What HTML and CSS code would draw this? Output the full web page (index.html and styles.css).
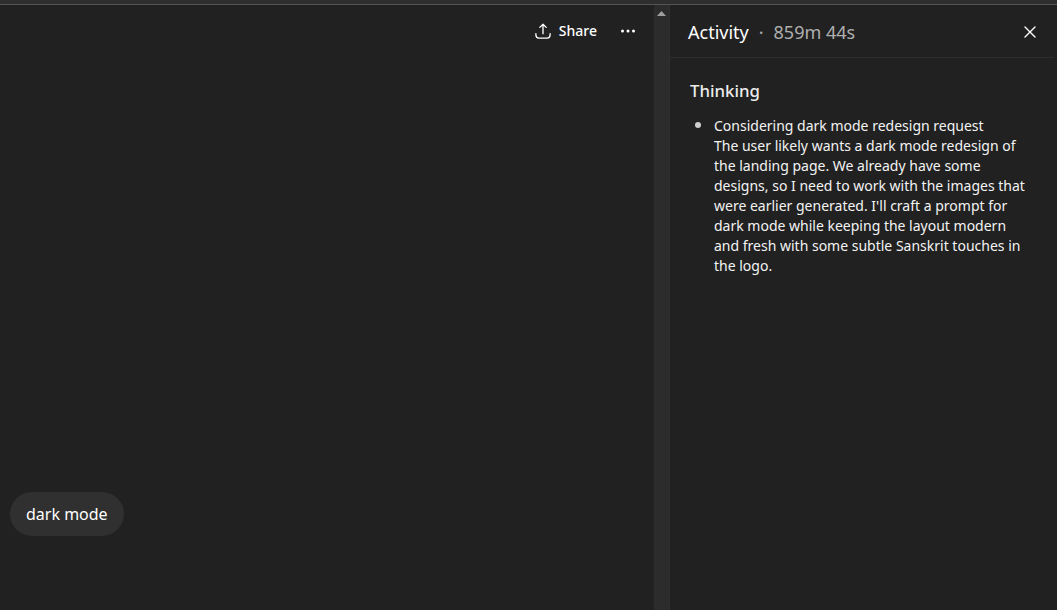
FILE: index.html
```html
<!DOCTYPE html>
<html lang="en">

<head>
    <meta charset="UTF-8">
    <meta name="viewport" content="width=device-width, initial-scale=1.0">
    <title>Chat</title>
    <link rel="stylesheet" href="styles.css">
</head>

<body>
    <div class="top-strip"></div>
    <div class="app">
        <main class="chat">
            <header class="chat-header">
                <button class="share-btn" type="button">
                    <svg width="20" height="20" viewBox="0 0 20 20" fill="none" stroke="currentColor" stroke-width="1.33" stroke-linecap="round" stroke-linejoin="round">
                        <path d="M10 12.7V3.4M6.8 6.4L10 3.2l3.2 3.2"/>
                        <path d="M2.9 12.6v1.5a3 3 0 0 0 3 3h8.2a3 3 0 0 0 3-3v-1.5"/>
                    </svg>
                    <span>Share</span>
                </button>
                <button class="more-btn" type="button" aria-label="More">
                    <svg width="20" height="20" viewBox="0 0 20 20" fill="currentColor">
                        <circle cx="4.5" cy="10" r="1.5"/>
                        <circle cx="10" cy="10" r="1.5"/>
                        <circle cx="15.5" cy="10" r="1.5"/>
                    </svg>
                </button>
            </header>
            <div class="message">dark mode</div>
        </main>
        <div class="scrollbar">
            <svg class="scroll-arrow" width="9" height="5" viewBox="0 0 9 5" fill="currentColor">
                <path d="M0 5L4.5 0L9 5z"/>
            </svg>
        </div>
        <aside class="activity">
            <header class="activity-header">
                <h2>Activity</h2>
                <span class="dot">·</span>
                <span class="duration">859m 44s</span>
                <button class="close-btn" type="button" aria-label="Close">
                    <svg width="20" height="20" viewBox="0 0 20 20" fill="none" stroke="currentColor" stroke-width="1.4" stroke-linecap="round">
                        <path d="M5 5l10 10M15 5L5 15"/>
                    </svg>
                </button>
            </header>
            <section class="thinking">
                <h3>Thinking</h3>
                <div class="thought">
                    <span class="bullet"></span>
                    <div>
                        <p>Considering dark mode redesign request</p>
                        <p>The user likely wants a dark mode redesign of the landing page. We already have some designs, so I need to work with the images that were earlier generated. I'll craft a prompt for dark mode while keeping the layout modern and fresh with some subtle Sanskrit touches in the logo.</p>
                    </div>
                </div>
            </section>
        </aside>
    </div>
</body>

</html>
```
FILE: styles.css
```css
* {
    padding: 0;
    margin: 0;
    box-sizing: border-box;
}

body {
    height: 100vh;
    display: flex;
    flex-direction: column;
    overflow: hidden;
    background-color: #212121;
    color: #fff;
    font-family: "Noto Sans", sans-serif;
}

button {
    display: flex;
    align-items: center;
    border: none;
    background: none;
    color: inherit;
    font-family: inherit;
}

svg {
    display: block;
}

.top-strip {
    height: 5px;
    background-color: #2e2e2e;
    border-bottom: 1px solid #555;
}

.app {
    flex: 1;
    display: flex;
    min-height: 0;
}

.chat {
    width: 654px;
    display: flex;
    flex-direction: column;
    justify-content: space-between;
    align-items: flex-start;
    padding-bottom: 74px;
}

.chat-header {
    width: 100%;
    height: 52px;
    display: flex;
    justify-content: flex-end;
    align-items: center;
    gap: 21px;
    padding-right: 16px;
}

.share-btn {
    gap: 6px;
    font-size: 14px;
    font-weight: 500;
    line-height: 20px;
}

.message {
    height: 44px;
    margin-left: 10px;
    padding: 0 16px;
    border-radius: 22px;
    background-color: #303030;
    font-size: 16px;
    line-height: 44px;
}

.scrollbar {
    width: 16px;
    padding: 6px 0 0 3px;
    background-color: #2c2c2c;
    border-right: 1px solid #303030;
}

.scroll-arrow {
    color: #9f9f9f;
}

.activity {
    flex: 1;
}

.activity-header {
    height: 53px;
    display: flex;
    align-items: center;
    margin-right: 3px;
    padding: 2px 14px 0 18px;
    border-bottom: 1px solid #2d2d2d;
    font-size: 18px;
}

.activity-header h2 {
    font-size: 18px;
    font-weight: 400;
}

.dot {
    margin: 0 10px;
    color: #afafaf;
}

.duration {
    color: #afafaf;
}

.close-btn {
    margin-left: auto;
}

.thinking {
    padding: 21px 28px 0 20px;
}

.thinking h3 {
    color: #ececec;
    font-size: 16.8px;
    font-weight: 500;
    line-height: 24px;
}

.thought {
    display: flex;
    margin-top: 13px;
    color: #f3f3f3;
    font-size: 14px;
    line-height: 20px;
}

.bullet {
    flex: none;
    width: 6px;
    height: 6px;
    margin: 6px 13px 0 5px;
    border-radius: 50%;
    background-color: #cdcdcd;
}
```
